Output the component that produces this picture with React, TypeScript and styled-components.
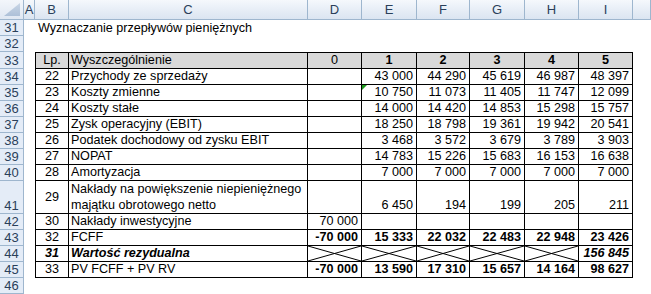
import React from 'react';
import styled, { createGlobalStyle, css } from 'styled-components';

const GlobalStyle = createGlobalStyle`
  html, body {
    margin: 0;
    padding: 0;
    background: #fff;
  }
  body {
    font-family: 'Liberation Sans', Arial, sans-serif;
    font-size: 12.6px;
    color: #000;
  }
`;

const COLS = '24px 11px 34px 239px 54px 55px 53px 55px 54px 54px 1fr';
const headerLine = '#9eb6ce';

const Sheet = styled.div`
  width: 651px;
  height: 294px;
  overflow: hidden;
  display: flex;
  flex-direction: column;
`;

const SheetRow = styled.div<{ $height?: number }>`
  display: grid;
  grid-template-columns: ${COLS};
  height: ${(p) => p.$height ?? 16}px;
  flex: none;
`;

const Corner = styled.div`
  position: relative;
  background: linear-gradient(#f3f6fb, #dfe7f2);
  border-right: 1px solid ${headerLine};
  border-bottom: 1px solid ${headerLine};
  box-sizing: border-box;

  &::after {
    content: '';
    position: absolute;
    right: 3px;
    bottom: 3px;
    width: 16px;
    height: 13px;
    background: linear-gradient(#c9d6e6, #adc0d8);
    clip-path: polygon(100% 0, 100% 100%, 0 100%);
  }
`;

const ColHeader = styled.div`
  background: linear-gradient(#f5f8fc 0%, #e9eff7 45%, #dbe5f1 100%);
  border-right: 1px solid ${headerLine};
  border-bottom: 1px solid ${headerLine};
  box-sizing: border-box;
  display: flex;
  align-items: center;
  justify-content: center;
  color: #2a3f5a;
  font-size: 13px;
  line-height: 19px;
`;

const RowHeader = styled.div`
  background: #e4ecf7;
  border-right: 1px solid ${headerLine};
  border-bottom: 1px solid ${headerLine};
  box-sizing: border-box;
  display: flex;
  align-items: flex-end;
  justify-content: center;
  color: #2a3f5a;
  font-size: 13px;
  line-height: 15px;
`;

const Blank = styled.div``;

const Title = styled.div`
  grid-column: 3 / -1;
  display: flex;
  align-items: flex-end;
  padding-left: 3px;
  line-height: 15px;
  white-space: nowrap;
`;

type Align = 'left' | 'center' | 'right';

const Cell = styled.div<{
  $align?: Align;
  $bold?: boolean;
  $italic?: boolean;
  $fill?: boolean;
  $first?: boolean;
  $top?: boolean;
  $middle?: boolean;
  $cross?: boolean;
}>`
  position: relative;
  box-sizing: border-box;
  border-right: 1px solid #000;
  border-bottom: 1px solid #000;
  ${(p) => p.$first && css`border-left: 1px solid #000;`}
  ${(p) => p.$top && css`border-top: 1px solid #000;`}
  background: ${(p) => (p.$fill ? '#d9d9d9' : '#fff')};
  display: flex;
  align-items: ${(p) => (p.$middle ? 'center' : 'flex-end')};
  justify-content: ${(p) =>
    p.$align === 'right' ? 'flex-end' : p.$align === 'center' ? 'center' : 'flex-start'};
  padding: ${(p) => (p.$cross ? '0' : p.$align === 'right' ? '0 3px 0 2px' : '0 2px')};
  font-weight: ${(p) => (p.$bold ? 700 : 400)};
  font-style: ${(p) => (p.$italic ? 'italic' : 'normal')};
  line-height: 15px;
  white-space: nowrap;
  overflow: hidden;
`;

const Wrapped = styled.span`
  display: block;
  white-space: nowrap;
  line-height: 16px;
`;

const ErrorMark = styled.span`
  position: absolute;
  left: 0;
  top: 0;
  width: 0;
  height: 0;
  border-top: 5px solid #1f9a1f;
  border-right: 5px solid transparent;
`;

const Cross = () => (
  <svg width="100%" height="100%" viewBox="0 0 100 100" preserveAspectRatio="none" style={{ display: 'block' }}>
    <line x1="0" y1="0" x2="100" y2="100" stroke="#000" strokeWidth="1" vectorEffect="non-scaling-stroke" />
    <line x1="0" y1="100" x2="100" y2="0" stroke="#000" strokeWidth="1" vectorEffect="non-scaling-stroke" />
  </svg>
);

type DataRow = {
  n: number;
  lp: string;
  label: React.ReactNode;
  d?: string;
  vals: string[];
  height?: number;
  boldNums?: boolean;
  boldItalic?: boolean;
  crossed?: boolean;
  mark?: boolean;
};

const data: DataRow[] = [
  { n: 34, lp: '22', label: 'Przychody ze sprzedaży', vals: ['43 000', '44 290', '45 619', '46 987', '48 397'] },
  { n: 35, lp: '23', label: 'Koszty zmienne', vals: ['10 750', '11 073', '11 405', '11 747', '12 099'], mark: true },
  { n: 36, lp: '24', label: 'Koszty stałe', vals: ['14 000', '14 420', '14 853', '15 298', '15 757'] },
  { n: 37, lp: '25', label: 'Zysk operacyjny (EBIT)', vals: ['18 250', '18 798', '19 361', '19 942', '20 541'] },
  { n: 38, lp: '26', label: 'Podatek dochodowy od zysku EBIT', vals: ['3 468', '3 572', '3 679', '3 789', '3 903'] },
  { n: 39, lp: '27', label: 'NOPAT', vals: ['14 783', '15 226', '15 683', '16 153', '16 638'] },
  { n: 40, lp: '28', label: 'Amortyzacja', vals: ['7 000', '7 000', '7 000', '7 000', '7 000'] },
  {
    n: 41,
    lp: '29',
    label: (
      <Wrapped>
        Nakłady na powiększenie niepieniężnego
        <br />
        majątku obrotowego netto
      </Wrapped>
    ),
    vals: ['6 450', '194', '199', '205', '211'],
    height: 33,
  },
  { n: 42, lp: '30', label: 'Nakłady inwestycyjne', d: '70 000', vals: ['', '', '', '', ''] },
  { n: 43, lp: '32', label: 'FCFF', d: '-70 000', vals: ['15 333', '22 032', '22 483', '22 948', '23 426'], boldNums: true },
  { n: 44, lp: '31', label: 'Wartość rezydualna', vals: ['', '', '', '', '156 845'], boldItalic: true, crossed: true },
  { n: 45, lp: '33', label: 'PV FCFF + PV RV', d: '-70 000', vals: ['13 590', '17 310', '15 657', '14 164', '98 627'], boldNums: true },
];

const letters = ['A', 'B', 'C', 'D', 'E', 'F', 'G', 'H', 'I', ''];

export default function App() {
  return (
    <>
      <GlobalStyle />
      <Sheet>
        <SheetRow $height={20}>
          <Corner />
          {letters.map((l, i) => (
            <ColHeader key={i}>{l}</ColHeader>
          ))}
        </SheetRow>

        <SheetRow>
          <RowHeader>31</RowHeader>
          <Blank />
          <Title>Wyznaczanie przepływów pieniężnych</Title>
        </SheetRow>

        <SheetRow>
          <RowHeader>32</RowHeader>
        </SheetRow>

        <SheetRow $height={17}>
          <RowHeader>33</RowHeader>
          <Blank />
          <Cell $fill $top $first $align="center">Lp.</Cell>
          <Cell $fill $top>Wyszczególnienie</Cell>
          <Cell $fill $top $align="center">0</Cell>
          {['1', '2', '3', '4', '5'].map((h) => (
            <Cell key={h} $fill $top $align="center" $bold>
              {h}
            </Cell>
          ))}
        </SheetRow>

        {data.map((r) => (
          <SheetRow key={r.n} $height={r.height}>
            <RowHeader>{r.n}</RowHeader>
            <Blank />
            <Cell $first $align="center" $middle={!!r.height} $bold={r.boldItalic} $italic={r.boldItalic}>
              {r.lp}
            </Cell>
            <Cell $bold={r.boldItalic} $italic={r.boldItalic}>{r.label}</Cell>
            {r.crossed ? (
              <Cell $cross>
                <Cross />
              </Cell>
            ) : (
              <Cell $align="right" $bold={r.boldNums}>{r.d}</Cell>
            )}
            {r.vals.map((v, i) =>
              r.crossed && i < 4 ? (
                <Cell key={i} $cross>
                  <Cross />
                </Cell>
              ) : (
                <Cell key={i} $align="right" $bold={r.boldNums || r.boldItalic} $italic={r.boldItalic}>
                  {r.mark && i === 0 && <ErrorMark />}
                  {v}
                </Cell>
              )
            )}
          </SheetRow>
        ))}

        <SheetRow>
          <RowHeader>46</RowHeader>
        </SheetRow>
      </Sheet>
    </>
  );
}
